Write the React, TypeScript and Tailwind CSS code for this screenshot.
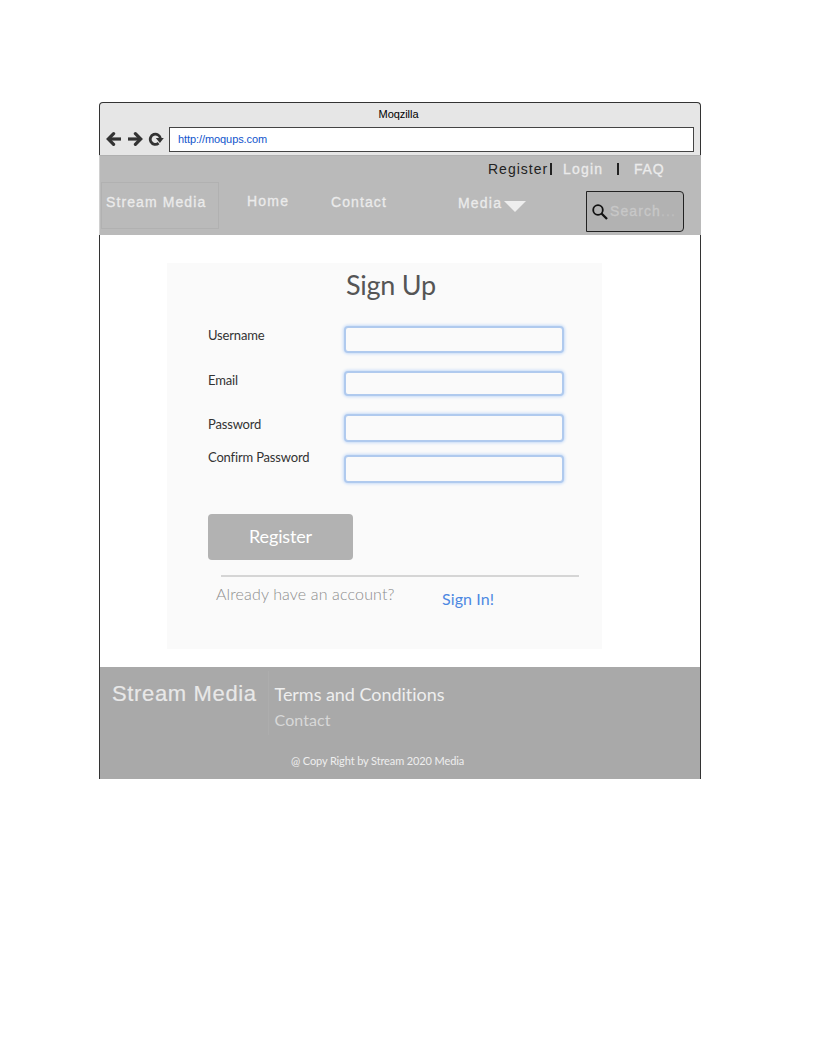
import type { ReactNode } from "react";

function Chrome() {
  return (
    <div className="h-[53px] rounded-t-[4px] border border-b-0 border-[#333] bg-[#e6e6e6]">
      <div className="h-[24px] pr-[3px] text-center font-['Liberation_Sans',sans-serif] text-[11px] leading-[23px] tracking-[-0.05px] text-black">
        Moqzilla
      </div>
      <div className="flex h-[25px] items-center pl-[6px]">
        <svg width="15" height="14" viewBox="0 0 15 14" fill="none" stroke="#333" strokeWidth="3.2" strokeLinecap="round" className="mb-[1px] shrink-0">
          <path d="M15 7H2.5" strokeLinecap="butt" />
          <path d="M7.6 1.7L2.3 7L7.6 12.3" />
        </svg>
        <svg width="15" height="14" viewBox="0 0 15 14" fill="none" stroke="#333" strokeWidth="3.2" strokeLinecap="round" className="mb-[1px] ml-[7px] shrink-0">
          <path d="M0 7H12.5" strokeLinecap="butt" />
          <path d="M7.4 1.7L12.7 7L7.4 12.3" />
        </svg>
        <svg width="16" height="14" viewBox="0 0 16 14" fill="none" className="mb-[1px] ml-[5px] shrink-0">
          <path d="M10.6 11.2A5.1 5.1 0 1 1 12.4 6.5" stroke="#333" strokeWidth="2.8" />
          <path d="M7.8 5.9H15.8L11.9 11Z" fill="#333" />
        </svg>
        <div className="ml-[5px] h-[25px] w-[525px] border border-[#444] bg-white pl-[8px] font-['Liberation_Sans',sans-serif] text-[11px] leading-[23px] tracking-[-0.08px] text-[#1155cc]">
          http://moqups.com
        </div>
      </div>
    </div>
  );
}

function Header() {
  return (
    <header className="flex h-[80px] flex-col border-l border-t border-l-[#d0d0d0] border-t-[#b0b0b0] bg-[#bababa] font-['Liberation_Sans',sans-serif] text-[14px] tracking-[1.1px] text-[#ebebeb]">
      <div className="flex h-[26px] items-center whitespace-nowrap pl-[388px]">
        <span className="w-[62px] tracking-[1px] text-[#222]">Register</span>
        <span className="h-[12px] w-[2px] bg-[#222]" />
        <span className="ml-[11px] w-[54px] tracking-[1.2px] [-webkit-text-stroke:0.3px]">Login</span>
        <span className="h-[12px] w-[2px] bg-[#222]" />
        <span className="ml-[15px] tracking-[0.8px] [-webkit-text-stroke:0.3px]">FAQ</span>
      </div>
      <div className="flex h-[53px] whitespace-nowrap leading-[20px] [-webkit-text-stroke:0.3px]">
        <div className="ml-[1px] h-[47px] w-[118px] border border-[#b1b1b1] pl-[4px] pt-[9px]">Stream Media</div>
        <div className="ml-[28px] w-[84px] pt-[9px] tracking-[1.2px]">Home</div>
        <div className="w-[127px] pt-[10px]">Contact</div>
        <div className="w-[46px] pt-[11px] tracking-[1.2px]">Media</div>
        <svg width="22" height="11" viewBox="0 0 22 11" className="mt-[19px] shrink-0">
          <path d="M0 0H22L11 11Z" fill="#eee" />
        </svg>
        <div className="ml-[60px] mt-[9px] flex h-[41px] w-[98px] items-center rounded-r-[4px] border border-[#222] bg-[#b2b2b2] pl-[5px]">
          <svg width="16" height="16" viewBox="0 0 16 16" fill="none" stroke="#111" className="shrink-0">
            <circle cx="6" cy="6" r="4.8" strokeWidth="1.8" />
            <path d="M9.5 9.5L15 15" strokeWidth="2.3" />
          </svg>
          <span className="ml-[2px] pb-[2px] text-[#c8c8c8]">
            Search<span className="text-[#bebebe]">...</span>
          </span>
        </div>
      </div>
    </header>
  );
}

function Field({ label, className, inputClass }: { label: ReactNode; className: string; inputClass: string }) {
  return (
    <label className={`flex ${className}`}>
      <span className="w-[136px] whitespace-nowrap text-[13px] leading-[18px] tracking-[-0.17px] text-[#333]">{label}</span>
      <input
        className={`w-[220px] rounded-[4px] border-2 border-[#b0caee] bg-[#fafafa] shadow-[0_0_3px_1px_#c6dbf8] outline-none ${inputClass}`}
      />
    </label>
  );
}

function SignUp() {
  return (
    <main className="h-[432px] border-x border-[#333] bg-white pl-[67px] pt-[28px] font-[Lato,sans-serif]">
      <form className="flex h-[386px] w-[435px] flex-col bg-[#fafafa] pl-[41px]">
        <h1 className="ml-[138px] h-[62px] pt-[4px] text-[27px] leading-[36px] tracking-[-0.25px] text-[#555]">Sign Up</h1>
        <Field label="Username" className="h-[45px] pt-[1px]" inputClass="h-[27px]" />
        <Field label="Email" className="h-[44px] pt-[1px]" inputClass="h-[25px]" />
        <Field label="Password" className="h-[33px] pt-[1px]" inputClass="-mt-px h-[28px]" />
        <Field label="Confirm Password" className="h-[67px] pt-[1px]" inputClass="mt-[7px] h-[28px]" />
        <button type="button" className="h-[46px] w-[145px] rounded-[4px] bg-[#b2b2b2] pb-[2px] text-[18px] leading-[42px] tracking-[-0.15px] text-white">
          Register
        </button>
        <div className="ml-[13px] mt-[15px] h-[2px] w-[358px] bg-[#d5d5d5]" />
        <div className="flex whitespace-nowrap pl-[8px] text-[16px] leading-[20px]">
          <span className="w-[226px] pt-[7px] font-light tracking-[0.14px] text-[#8c8c8c]">Already have an account?</span>
          <a className="pt-[12px] tracking-[0.1px] text-[#4d88e2]">Sign In!</a>
        </div>
      </form>
    </main>
  );
}

function Footer() {
  return (
    <footer className="h-[112px] border-x border-[#333] bg-[#a9a9a9] font-[Lato,sans-serif] text-[#eee]">
      <div className="flex h-[83px] whitespace-nowrap pl-[12px] pt-[4px]">
        <div className="h-[64px] w-[157px] border-r border-[#adadad] pt-[9px] font-['Liberation_Sans',sans-serif] text-[22px] leading-[28px] tracking-[0.65px] text-[#e8e8e8] [-webkit-text-stroke:0.2px]">
          Stream Media
        </div>
        <div className="pl-[5.5px] pt-[11px]">
          <div className="text-[18px] leading-[24px] tracking-[-0.04px] [font-variant-ligatures:none]">Terms and Conditions</div>
          <div className="pt-[4px] text-[16px] leading-[20px] tracking-[0.1px] text-[#d8d8d8]">Contact</div>
        </div>
      </div>
      <div className="whitespace-nowrap pl-[191px] text-[11px] leading-[22px] tracking-[-0.12px]">@ Copy Right by Stream 2020 Media</div>
    </footer>
  );
}

export default function App() {
  return (
    <div className="h-[1056px] w-[816px] overflow-hidden bg-white pl-[99px] pt-[102px]">
      <div className="w-[602px]">
        <Chrome />
        <Header />
        <SignUp />
        <Footer />
      </div>
    </div>
  );
}
